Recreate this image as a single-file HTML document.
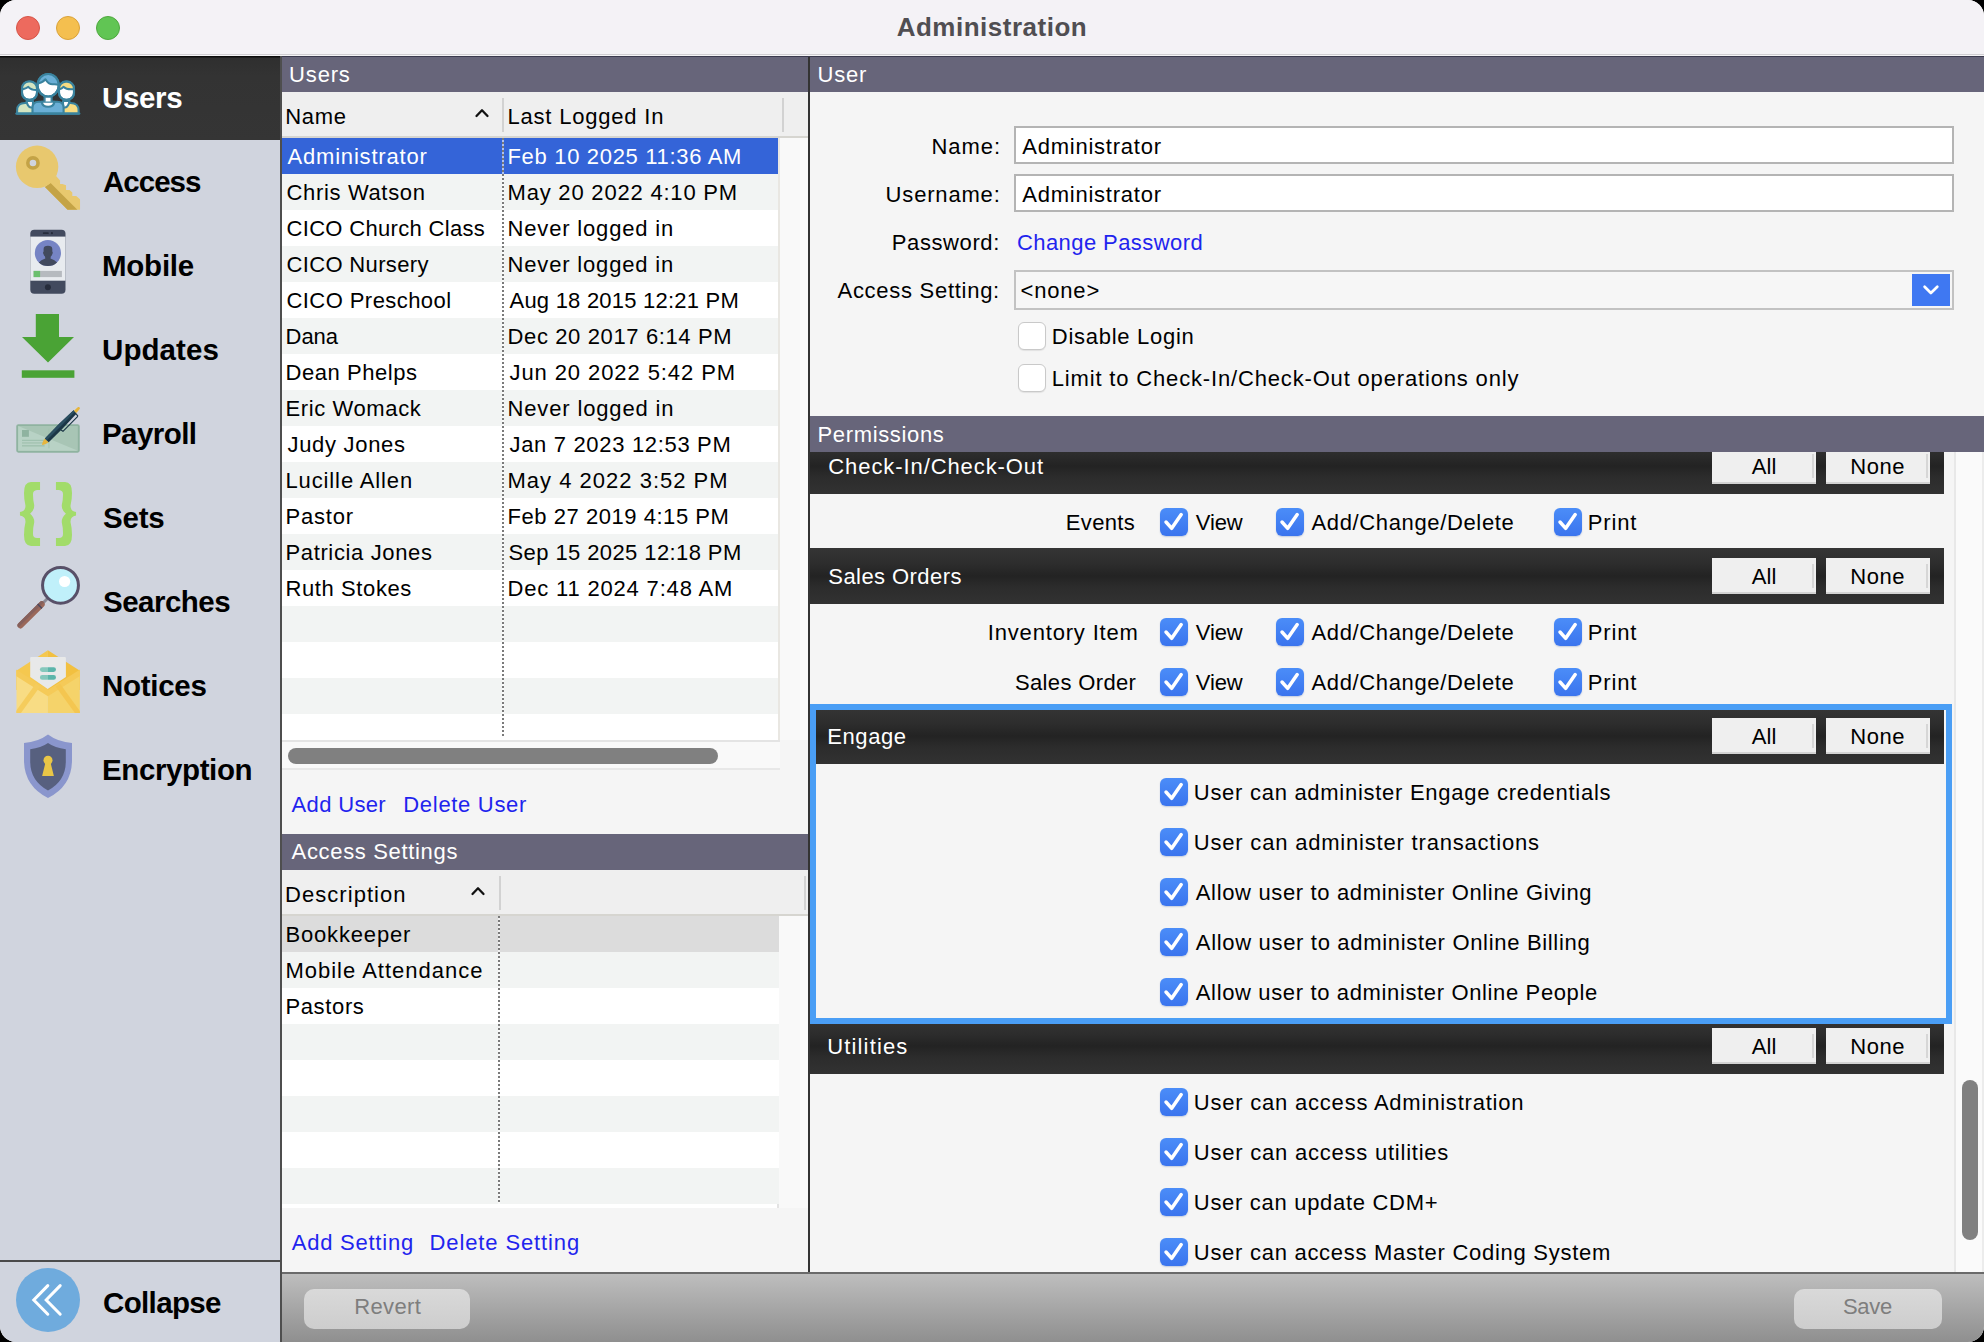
<!DOCTYPE html><html><head><meta charset="utf-8"><title>Administration</title><style>
html,body{margin:0;padding:0;background:#000;width:1984px;height:1342px;overflow:hidden}
#win{position:absolute;left:0;top:0;width:1984px;height:1342px;border-radius:16px;overflow:hidden;background:#f5f5f5;font-family:"Liberation Sans", sans-serif}
.t{position:absolute;white-space:nowrap;line-height:1;font-family:"Liberation Sans", sans-serif}
.r{position:absolute}
svg{position:absolute;overflow:visible}

</style></head><body><div id="win">
<div class="r" style="left:0px;top:0px;width:1984px;height:54px;background:#f4f2f6"></div>
<div class="r" style="left:0px;top:54px;width:1984px;height:1px;background:#d0ced2"></div>
<div class="r" style="left:0px;top:55px;width:1984px;height:1px;background:#f6f5f7"></div>
<div class="r" style="left:16px;top:16px;width:24px;height:24px;background:#ed6a5e;border-radius:50%;box-sizing:border-box;border:1px solid #d65548"></div>
<div class="r" style="left:56px;top:16px;width:24px;height:24px;background:#f4bf4f;border-radius:50%;box-sizing:border-box;border:1px solid #d9a23a"></div>
<div class="r" style="left:96px;top:16px;width:24px;height:24px;background:#61c554;border-radius:50%;box-sizing:border-box;border:1px solid #4fa83f"></div>
<div class="t" style="left:896.70px;top:13.59px;font-size:26px;color:#504e52;font-weight:700;letter-spacing:0.508px;">Administration</div>
<div class="r" style="left:0px;top:56px;width:280px;height:1286px;background:#d0d4de"></div>
<div class="r" style="left:0px;top:56px;width:280px;height:84px;background:linear-gradient(#0c0c0c 0px,#0c0c0c 1px,#2f2f2f 2px,#333 20px,#353535 100%)"></div>
<div class="r" style="left:280px;top:56px;width:2px;height:1286px;background:#4e4e4e"></div>
<div class="r" style="left:0px;top:1260px;width:280px;height:2px;background:#4a4a4a"></div>
<div class="t" style="left:102.00px;top:82.93px;font-size:29.5px;color:#fff;font-weight:700;letter-spacing:-0.350px;">Users</div>
<div class="t" style="left:103.00px;top:166.93px;font-size:29.5px;color:#000;font-weight:700;letter-spacing:-0.980px;">Access</div>
<div class="t" style="left:102.00px;top:250.93px;font-size:29.5px;color:#000;font-weight:700;letter-spacing:-0.240px;">Mobile</div>
<div class="t" style="left:102.00px;top:334.93px;font-size:29.5px;color:#000;font-weight:700;letter-spacing:0.083px;">Updates</div>
<div class="t" style="left:102.00px;top:418.93px;font-size:29.5px;color:#000;font-weight:700;letter-spacing:-0.567px;">Payroll</div>
<div class="t" style="left:103.00px;top:502.93px;font-size:29.5px;color:#000;font-weight:700;letter-spacing:-0.200px;">Sets</div>
<div class="t" style="left:103.00px;top:586.93px;font-size:29.5px;color:#000;font-weight:700;letter-spacing:-0.514px;">Searches</div>
<div class="t" style="left:102.00px;top:670.93px;font-size:29.5px;color:#000;font-weight:700;letter-spacing:-0.283px;">Notices</div>
<div class="t" style="left:102.00px;top:754.93px;font-size:29.5px;color:#000;font-weight:700;letter-spacing:-0.389px;">Encryption</div>
<div class="t" style="left:103.00px;top:1287.73px;font-size:29.5px;color:#000;font-weight:700;letter-spacing:-0.643px;">Collapse</div>
<svg style="left:0;top:0" width="1984" height="1342" viewBox="0 0 1984 1342">
<defs>
 <clipPath id="chead"><ellipse cx="48.15" cy="85.25" rx="10.6" ry="11.3"/></clipPath>
 <clipPath id="lhead"><rect x="22" y="81.5" width="15" height="18.3" rx="7"/></clipPath>
 <clipPath id="rhead"><rect x="59" y="81.6" width="15" height="18.3" rx="7"/></clipPath>
</defs>
<g stroke="#3a839e" stroke-width="2.1" stroke-linejoin="round">
 <path d="M17.1,113.6 L17.1,110.5 Q17.1,103 25,103 L33,103 L33,113.6 Z" fill="#d4e5c1"/>
 <path d="M78.6,113.6 L78.6,110.5 Q78.6,103 70.6,103 L63,103 L63,113.6 Z" fill="#f7dc82"/>
 <path d="M26.5,101 Q27.5,107 31,107.5 L33,107.5 L33,101 Z" fill="#fff"/>
 <path d="M69.5,101 Q68.5,107 65,107.5 L63,107.5 L63,101 Z" fill="#fff"/>
 <rect x="22" y="81.5" width="15" height="18.3" rx="7" fill="#fff"/>
 <rect x="59" y="81.6" width="15" height="18.3" rx="7" fill="#fff"/>
 <g clip-path="url(#lhead)"><path d="M20,70 L20,89.3 L22.9,89.3 Q26.5,88 28.3,86.8 Q31,90.2 36.9,90 L40,90 L40,70 Z" fill="#d4e5c1" stroke-width="2"/></g>
 <g clip-path="url(#rhead)"><path d="M57,70 L57,89.3 L59.4,89.3 Q62,88.5 63.4,86.8 Q66.5,89.8 72.7,89.3 L76,89.3 L76,70 Z" fill="#f7dc82" stroke-width="2"/></g>
 <rect x="22" y="81.5" width="15" height="18.3" rx="7" fill="none"/>
 <rect x="59" y="81.6" width="15" height="18.3" rx="7" fill="none"/>
 <path d="M32.5,113.6 L32.5,107.5 Q32.5,101.7 39,101.7 L57.2,101.7 Q63.6,101.7 63.6,107.5 L63.6,113.6 Z" fill="#6aafd6"/>
 <path d="M41.6,101.7 Q42.5,106.8 48.1,106.8 Q53.6,106.8 54.5,101.7 Z" fill="#fff"/>
 <rect x="44.6" y="95" width="7" height="6.5" fill="#fff" stroke="none"/>
 <path d="M44.6,96 L44.6,101.7 M51.6,96 L51.6,101.7" fill="none"/>
 <ellipse cx="48.15" cy="85.25" rx="10.6" ry="11.3" fill="#fff"/>
 <g clip-path="url(#chead)"><path d="M36,70 L36,83.3 L38.7,83.3 Q43.5,82 45.5,79.2 Q48.5,84.6 53,84.3 Q56.5,84 58.8,85 L61,85 L61,70 Z" fill="#6aafd6" stroke-width="2"/></g>
 <ellipse cx="48.15" cy="85.25" rx="10.6" ry="11.3" fill="none"/>
 <path d="M16.5,113.6 L79.2,113.6" stroke-width="2.4" stroke-linecap="round"/>
</g></svg>
<svg style="left:0;top:0" width="1984" height="1342" viewBox="0 0 1984 1342">
 <path d="M44.87,187.09 L55.9,175.77 L60.07,180.54 L60.07,184.11 L62.46,184.11 L66.04,185.3 L66.04,190.07 L69.61,190.07 L72.3,192.46 L72.3,196.04 L76.17,196.04 L80.04,199.31 L80.04,209.75 L67.53,209.75 Z" fill="#e8c86e"/>
 <path d="M44.87,187.09 L50.54,182.92 L77.36,209.75 L67.53,209.75 Z" fill="#c4a346"/>
 <circle cx="37.1" cy="166.8" r="21.2" fill="#e8c86e"/>
 <circle cx="32.95" cy="162.95" r="5.1" fill="#d0d4de" stroke="#c4a346" stroke-width="3.6"/>
</svg>
<svg style="left:0;top:0" width="1984" height="1342" viewBox="0 0 1984 1342">
 <defs><clipPath id="mav"><circle cx="47.9" cy="253" r="13.1"/></clipPath></defs>
 <rect x="30.3" y="229.7" width="35.2" height="64.1" rx="4" fill="#424a5e"/>
 <rect x="30.3" y="236.6" width="35.2" height="44.1" fill="#e8ebef"/>
 <rect x="42.8" y="232.3" width="6" height="1.7" rx="0.85" fill="#262c3b"/>
 <circle cx="51.9" cy="233.15" r="1.1" fill="#262c3b"/>
 <circle cx="47.9" cy="287.3" r="3" fill="#262c3b"/>
 <circle cx="47.9" cy="253" r="13.1" fill="#7684c4"/>
 <g clip-path="url(#mav)" fill="#424a5e">
  <path d="M43.6,249 Q43.6,245.8 47.9,245.8 Q52.3,245.8 52.3,249 L52.3,251.5 Q53,252 52.6,253.6 Q52,255.5 50.8,256.5 L50.5,258.5 Q55,260 57,262.5 Q58,264 58,268 L37.8,268 Q37.8,264 38.8,262.5 Q40.8,260 45.3,258.5 L45,256.5 Q43.8,255.5 43.2,253.6 Q42.8,252 43.6,251.5 Z"/>
 </g>
 <rect x="33.6" y="270.9" width="28.3" height="6.2" fill="#b6babf"/>
 <rect x="33.6" y="270.9" width="6.5" height="6.2" fill="#6cbf6e"/>
</svg>
<svg style="left:0;top:0" width="1984" height="1342" viewBox="0 0 1984 1342">
 <path d="M35.8,314 L59,314 L59,337 L74,337 L48,362.5 L22,337 L35.8,337 Z" fill="#4aa335"/>
 <rect x="21.8" y="370.3" width="52.6" height="7.5" fill="#4aa335"/>
</svg>
<svg style="left:0;top:0" width="1984" height="1342" viewBox="0 0 1984 1342">
 <rect x="17.2" y="425.1" width="61.6" height="26.6" rx="1.2" fill="#a8c5b5" stroke="#8fb3a0" stroke-width="1.9"/>
 <path d="M18.2,426.1 L77.9,450.7 L18.2,450.7 Z" fill="#b8d2c5"/>
 <rect x="22" y="430" width="6.9" height="6.8" fill="#8fb3a0"/>
 <rect x="22" y="439.8" width="22.6" height="1.1" fill="#9dbfac"/>
 <rect x="22" y="442.4" width="22.6" height="1.1" fill="#9dbfac"/>
 <rect x="22" y="445.2" width="22.6" height="1.3" fill="#9dbfac"/>
 <rect x="48.5" y="428.7" width="0.9" height="19.6" fill="#a2c2b0"/>
 <g transform="translate(42,445.2) rotate(-45.2)">
  <path d="M0.3,0 Q1.5,-1.8 6.8,-2.7 L6.8,2.7 Q1.5,1.8 0.3,0 Z" fill="#e6b53c"/>
  <path d="M6.8,-2.7 Q26,-3.3 47,-2.2 L47,2.2 Q26,3.2 6.8,2.7 Z" fill="#1b3646"/>
  <path d="M6.8,-2.7 Q26,-3.3 47,-2.2 L47,-0.2 Q26,0 6.8,0 Z" fill="#2b4f61"/>
  <path d="M47,-1.7 L52.5,-1.3 Q54.3,0 52.5,1.3 L47,1.7 Z" fill="#e6b53c"/>
  <path d="M24.2,2.8 L24.6,5.1 L45.3,5.1 Q46.3,5 46.2,3.6 L45.8,2.2" stroke="#1b3646" stroke-width="1.15" fill="none" stroke-linejoin="round"/>
 </g>
</svg>
<svg style="left:0;top:0" width="1984" height="1342" viewBox="0 0 1984 1342">
 <path d="M40.05,481.95 L40.05,489.9 L37,489.9 Q32.7,490.3 33,494.7 Q33,500 34.2,505 Q34.6,510 30.1,513.8 Q34.6,517.6 34.2,522.6 Q33,527.6 33,533 Q32.7,538 37,538 L40.05,538 L40.05,545.9 L31,545.9 Q24,545.9 24,535 Q24,528 25.4,522.5 Q26,516.5 19.95,515.6 L19.95,512 Q26,511 25.4,505.2 Q24,499.6 24,492.9 Q24,481.95 31,481.95 Z" fill="#a2dc6a"/>
 <path d="M55.95,481.95 L55.95,489.9 L59.00,489.9 Q63.30,490.3 63.00,494.7 Q63.00,500 61.80,505 Q61.40,510 65.90,513.8 Q61.40,517.6 61.80,522.6 Q63.00,527.6 63.00,533 Q63.30,538 59.00,538 L55.95,538 L55.95,545.9 L65.00,545.9 Q72.00,545.9 72.00,535 Q72.00,528 70.60,522.5 Q70.00,516.5 76.05,515.6 L76.05,512 Q70.00,511 70.60,505.2 Q72.00,499.6 72.00,492.9 Q72.00,481.95 65.00,481.95 Z" fill="#a2dc6a"/>
</svg>
<svg style="left:0;top:0" width="1984" height="1342" viewBox="0 0 1984 1342">
 <path d="M42.5,603.5 L48,598" stroke="#8b8a96" stroke-width="3" />
 <g transform="translate(18.4,627.6) rotate(-45)">
  <rect x="0" y="-3" width="36" height="6" rx="3" fill="#9a685a"/>
  <path d="M3,-3 L33,-3 Q36,-3 36,0 L0,0 Q0,-3 3,-3 Z" fill="#85605c"/>
  <rect x="29.5" y="-3.05" width="1.5" height="6.1" fill="#4f4a5e"/>
 </g>
 <circle cx="60.5" cy="585.35" r="17.95" fill="#c0f0fa" stroke="#585068" stroke-width="3"/>
 <circle cx="64.6" cy="581.5" r="5.6" fill="#fff"/>
</svg>
<svg style="left:0;top:0" width="1984" height="1342" viewBox="0 0 1984 1342">
 <defs><clipPath id="envb"><rect x="16.3" y="650" width="63.6" height="63"/></clipPath></defs>
 <path d="M16.3,670.7 L47.9,650.3 L47.9,690 L16.3,690 Z" fill="#f5c84f"/>
 <path d="M79.9,670.7 L47.9,650.3 L47.9,690 L79.9,690 Z" fill="#f2c040"/>
 <path d="M30.2,658 Q30.2,657 31.2,657 L64.9,657 Q65.9,657 65.9,658 L65.9,677.1 L47.7,688.9 L30.2,677.1 Z" fill="#e8e9e9"/>
 <path d="M42.3,667.2 L48,667.2 L48,672 L42.3,672 A2.4,2.4 0 0 1 42.3,667.2 Z" fill="#84c8bc"/>
 <path d="M48,667.2 L53.6,667.2 A2.4,2.4 0 0 1 53.6,672 L48,672 Z" fill="#5bb5aa"/>
 <path d="M42.3,675 L48,675 L48,679.8 L42.3,679.8 A2.4,2.4 0 0 1 42.3,675 Z" fill="#84c8bc"/>
 <path d="M48,675 L53.6,675 A2.4,2.4 0 0 1 53.6,679.8 L48,679.8 Z" fill="#5bb5aa"/>
 <g clip-path="url(#envb)">
  <path d="M16.3,670.7 L47.9,690.8 L47.9,713 L16.3,713 Z" fill="#f8dc84"/>
  <path d="M79.9,670.7 L47.9,690.8 L47.9,713 L79.9,713 Z" fill="#f5d36a"/>
  <path d="M14,671.5 L47.9,693 L81.9,671.5" stroke="#f5ca58" stroke-width="5.4" fill="none" stroke-linejoin="miter"/>
  <path d="M38,685 L17,714" stroke="#f5cc5c" stroke-width="5.2"/>
  <path d="M57.8,685 L78.8,714" stroke="#f4c650" stroke-width="5.2"/>
 </g>
</svg>
<svg style="left:0;top:0" width="1984" height="1342" viewBox="0 0 1984 1342">
 <path d="M48,734.5 Q58,742 72,743 L72,760 Q72,786 48,798 Q24,786 24,760 L24,743 Q38,742 48,734.5Z" fill="#8a96cd"/>
 <path d="M48,743 Q55,748 65.8,749.2 L65.8,762 Q65.5,781 48,790.5 Q30.5,781 30.2,762 L30.2,749.2 Q41,748 48,743Z" fill="#57607f"/>
 <circle cx="48" cy="760.3" r="4.5" fill="#e9c647"/>
 <path d="M45.6,762 L50.4,762 L53.9,775.9 L42.1,775.9Z" fill="#e9c647"/>
</svg>
<svg style="left:0;top:0" width="1984" height="1342" viewBox="0 0 1984 1342">
 <circle cx="48" cy="1300" r="32" fill="#6fabdd"/>
 <path d="M47.8,1285.6 L33.8,1300 L47.8,1314.2" stroke="#fff" stroke-width="3" fill="none" stroke-linecap="round" stroke-linejoin="miter"/>
 <path d="M60.2,1285.6 L46.2,1300 L60.2,1314.2" stroke="#fff" stroke-width="3" fill="none" stroke-linecap="round" stroke-linejoin="miter"/>
</svg>
<div class="r" style="left:282px;top:56px;width:526px;height:1216px;background:#f5f5f5"></div>
<div class="r" style="left:282px;top:56px;width:526px;height:36px;background:#67657a"></div>
<div class="r" style="left:282px;top:56px;width:526px;height:1px;background:#3b3a4e"></div>
<div class="t" style="left:289.10px;top:64.38px;font-size:22px;color:#fff;font-weight:400;letter-spacing:0.825px;">Users</div>
<div class="r" style="left:282px;top:92px;width:526px;height:44px;background:#efefef"></div>
<div class="r" style="left:282px;top:136px;width:526px;height:2px;background:#d6d5d0"></div>
<div class="r" style="left:502px;top:98px;width:2px;height:34px;background:#d2d2d2"></div>
<div class="r" style="left:782px;top:98px;width:2px;height:34px;background:#d2d2d2"></div>
<div class="t" style="left:285.30px;top:106.38px;font-size:22px;color:#000;font-weight:400;letter-spacing:0.667px;">Name</div>
<div class="t" style="left:507.40px;top:106.38px;font-size:22px;color:#000;font-weight:400;letter-spacing:0.808px;">Last Logged In</div>
<svg style="left:474px;top:107px" width="16" height="12"><path d="M2.5,9 L8,3.3 L13.5,9" stroke="#111" stroke-width="2.3" fill="none" stroke-linecap="round" stroke-linejoin="round"/></svg>
<div class="r" style="left:778px;top:138px;width:30px;height:602px;background:#f9f9f9"></div>
<div class="r" style="left:778px;top:138px;width:2px;height:602px;background:#e9e7e2"></div>
<div class="r" style="left:282px;top:138px;width:496px;height:36px;background:#3464d8"></div>
<div class="r" style="left:282px;top:174px;width:496px;height:36px;background:#f2f4f3"></div>
<div class="r" style="left:282px;top:210px;width:496px;height:36px;background:#ffffff"></div>
<div class="r" style="left:282px;top:246px;width:496px;height:36px;background:#f2f4f3"></div>
<div class="r" style="left:282px;top:282px;width:496px;height:36px;background:#ffffff"></div>
<div class="r" style="left:282px;top:318px;width:496px;height:36px;background:#f2f4f3"></div>
<div class="r" style="left:282px;top:354px;width:496px;height:36px;background:#ffffff"></div>
<div class="r" style="left:282px;top:390px;width:496px;height:36px;background:#f2f4f3"></div>
<div class="r" style="left:282px;top:426px;width:496px;height:36px;background:#ffffff"></div>
<div class="r" style="left:282px;top:462px;width:496px;height:36px;background:#f2f4f3"></div>
<div class="r" style="left:282px;top:498px;width:496px;height:36px;background:#ffffff"></div>
<div class="r" style="left:282px;top:534px;width:496px;height:36px;background:#f2f4f3"></div>
<div class="r" style="left:282px;top:570px;width:496px;height:36px;background:#ffffff"></div>
<div class="r" style="left:282px;top:606px;width:496px;height:36px;background:#f2f4f3"></div>
<div class="r" style="left:282px;top:642px;width:496px;height:36px;background:#ffffff"></div>
<div class="r" style="left:282px;top:678px;width:496px;height:36px;background:#f2f4f3"></div>
<div class="r" style="left:282px;top:714px;width:496px;height:26px;background:#ffffff"></div>
<div class="r" style="left:502px;top:138px;width:2px;height:600px;background:repeating-linear-gradient(#7a7a7a 0 2px,rgba(255,255,255,0.6) 2px 4px)"></div>
<div class="t" style="left:287.50px;top:146.38px;font-size:22px;color:#fff;font-weight:400;letter-spacing:0.808px;">Administrator</div>
<div class="t" style="left:507.50px;top:146.38px;font-size:22px;color:#fff;font-weight:400;letter-spacing:0.679px;">Feb 10 2025 11:36 AM</div>
<div class="t" style="left:286.50px;top:182.38px;font-size:22px;color:#000;font-weight:400;letter-spacing:0.655px;">Chris Watson</div>
<div class="t" style="left:507.50px;top:182.38px;font-size:22px;color:#000;font-weight:400;letter-spacing:0.800px;">May 20 2022 4:10 PM</div>
<div class="t" style="left:286.50px;top:218.38px;font-size:22px;color:#000;font-weight:400;letter-spacing:0.325px;">CICO Church Class</div>
<div class="t" style="left:507.50px;top:218.38px;font-size:22px;color:#000;font-weight:400;letter-spacing:0.836px;">Never logged in</div>
<div class="t" style="left:286.50px;top:254.38px;font-size:22px;color:#000;font-weight:400;letter-spacing:0.345px;">CICO Nursery</div>
<div class="t" style="left:507.50px;top:254.38px;font-size:22px;color:#000;font-weight:400;letter-spacing:0.836px;">Never logged in</div>
<div class="t" style="left:286.50px;top:290.38px;font-size:22px;color:#000;font-weight:400;letter-spacing:0.431px;">CICO Preschool</div>
<div class="t" style="left:509.50px;top:290.38px;font-size:22px;color:#000;font-weight:400;letter-spacing:0.221px;">Aug 18 2015 12:21 PM</div>
<div class="t" style="left:285.50px;top:326.38px;font-size:22px;color:#000;font-weight:400;letter-spacing:0.000px;">Dana</div>
<div class="t" style="left:507.50px;top:326.38px;font-size:22px;color:#000;font-weight:400;letter-spacing:0.628px;">Dec 20 2017 6:14 PM</div>
<div class="t" style="left:285.50px;top:362.38px;font-size:22px;color:#000;font-weight:400;letter-spacing:0.560px;">Dean Phelps</div>
<div class="t" style="left:509.50px;top:362.38px;font-size:22px;color:#000;font-weight:400;letter-spacing:0.911px;">Jun 20 2022 5:42 PM</div>
<div class="t" style="left:285.50px;top:398.38px;font-size:22px;color:#000;font-weight:400;letter-spacing:0.610px;">Eric Womack</div>
<div class="t" style="left:507.50px;top:398.38px;font-size:22px;color:#000;font-weight:400;letter-spacing:0.850px;">Never logged in</div>
<div class="t" style="left:287.50px;top:434.38px;font-size:22px;color:#000;font-weight:400;letter-spacing:0.689px;">Judy Jones</div>
<div class="t" style="left:509.50px;top:434.38px;font-size:22px;color:#000;font-weight:400;letter-spacing:0.672px;">Jan 7 2023 12:53 PM</div>
<div class="t" style="left:285.50px;top:470.38px;font-size:22px;color:#000;font-weight:400;letter-spacing:0.875px;">Lucille Allen</div>
<div class="t" style="left:507.50px;top:470.38px;font-size:22px;color:#000;font-weight:400;letter-spacing:1.006px;">May 4 2022 3:52 PM</div>
<div class="t" style="left:285.50px;top:506.38px;font-size:22px;color:#000;font-weight:400;letter-spacing:0.820px;">Pastor</div>
<div class="t" style="left:507.50px;top:506.38px;font-size:22px;color:#000;font-weight:400;letter-spacing:0.544px;">Feb 27 2019 4:15 PM</div>
<div class="t" style="left:285.50px;top:542.38px;font-size:22px;color:#000;font-weight:400;letter-spacing:0.631px;">Patricia Jones</div>
<div class="t" style="left:508.50px;top:542.38px;font-size:22px;color:#000;font-weight:400;letter-spacing:0.405px;">Sep 15 2025 12:18 PM</div>
<div class="t" style="left:285.50px;top:578.38px;font-size:22px;color:#000;font-weight:400;letter-spacing:0.600px;">Ruth Stokes</div>
<div class="t" style="left:507.50px;top:578.38px;font-size:22px;color:#000;font-weight:400;letter-spacing:0.822px;">Dec 11 2024 7:48 AM</div>
<div class="r" style="left:282px;top:740px;width:498px;height:30px;background:#f9f9f9"></div>
<div class="r" style="left:282px;top:740px;width:498px;height:2px;background:#e4e4e4"></div>
<div class="r" style="left:282px;top:768px;width:498px;height:2px;background:#e8e8e8"></div>
<div class="r" style="left:288px;top:748px;width:430px;height:16px;background:#808080;border-radius:8px"></div>
<div class="t" style="left:291.60px;top:794.38px;font-size:22px;color:#1f24ee;font-weight:400;letter-spacing:0.343px;">Add User</div>
<div class="t" style="left:403.30px;top:794.38px;font-size:22px;color:#1f24ee;font-weight:400;letter-spacing:0.690px;">Delete User</div>
<div class="r" style="left:282px;top:834px;width:526px;height:36px;background:#67657a"></div>
<div class="t" style="left:291.60px;top:841.38px;font-size:22px;color:#fff;font-weight:400;letter-spacing:0.664px;">Access Settings</div>
<div class="r" style="left:282px;top:870px;width:526px;height:44px;background:#efefef"></div>
<div class="r" style="left:282px;top:914px;width:526px;height:2px;background:#d6d5d0"></div>
<div class="r" style="left:499px;top:876px;width:2px;height:34px;background:#d2d2d2"></div>
<div class="r" style="left:804px;top:876px;width:2px;height:34px;background:#d2d2d2"></div>
<div class="t" style="left:285.00px;top:884.38px;font-size:22px;color:#000;font-weight:400;letter-spacing:1.050px;">Description</div>
<svg style="left:470px;top:885px" width="16" height="12"><path d="M2.5,9 L8,3.3 L13.5,9" stroke="#111" stroke-width="2.3" fill="none" stroke-linecap="round" stroke-linejoin="round"/></svg>
<div class="r" style="left:779px;top:916px;width:29px;height:292px;background:#f9f9f9"></div>
<div class="r" style="left:282px;top:1204px;width:497px;height:4px;background:#ffffff"></div>
<div class="r" style="left:777px;top:916px;width:2px;height:292px;background:#e3e3e3"></div>
<div class="r" style="left:282px;top:916px;width:497px;height:36px;background:#dcdcdc"></div>
<div class="r" style="left:282px;top:952px;width:497px;height:36px;background:#f2f4f3"></div>
<div class="r" style="left:282px;top:988px;width:497px;height:36px;background:#ffffff"></div>
<div class="r" style="left:282px;top:1024px;width:497px;height:36px;background:#f2f4f3"></div>
<div class="r" style="left:282px;top:1060px;width:497px;height:36px;background:#ffffff"></div>
<div class="r" style="left:282px;top:1096px;width:497px;height:36px;background:#f2f4f3"></div>
<div class="r" style="left:282px;top:1132px;width:497px;height:36px;background:#ffffff"></div>
<div class="r" style="left:282px;top:1168px;width:497px;height:36px;background:#f2f4f3"></div>
<div class="r" style="left:498px;top:916px;width:2px;height:288px;background:repeating-linear-gradient(#7a7a7a 0 2px,rgba(255,255,255,0.6) 2px 4px)"></div>
<div class="t" style="left:285.40px;top:924.38px;font-size:22px;color:#000;font-weight:400;letter-spacing:0.844px;">Bookkeeper</div>
<div class="t" style="left:285.40px;top:960.38px;font-size:22px;color:#000;font-weight:400;letter-spacing:1.006px;">Mobile Attendance</div>
<div class="t" style="left:285.40px;top:996.38px;font-size:22px;color:#000;font-weight:400;letter-spacing:0.650px;">Pastors</div>
<div class="t" style="left:291.70px;top:1232.38px;font-size:22px;color:#1f24ee;font-weight:400;letter-spacing:0.770px;">Add Setting</div>
<div class="t" style="left:429.60px;top:1232.38px;font-size:22px;color:#1f24ee;font-weight:400;letter-spacing:0.877px;">Delete Setting</div>
<div class="r" style="left:808px;top:56px;width:2px;height:1216px;background:#333"></div>
<div class="r" style="left:810px;top:56px;width:1174px;height:1216px;background:#f5f5f5"></div>
<div class="r" style="left:810px;top:56px;width:1174px;height:36px;background:#67657a"></div>
<div class="r" style="left:808px;top:56px;width:1176px;height:1px;background:#3b3a4e"></div>
<div class="t" style="left:817.50px;top:64.38px;font-size:22px;color:#fff;font-weight:400;letter-spacing:0.800px;">User</div>
<div class="t" style="left:931.50px;top:136.38px;font-size:22px;color:#000;font-weight:400;letter-spacing:0.925px;">Name:</div>
<div class="t" style="left:885.60px;top:184.38px;font-size:22px;color:#000;font-weight:400;letter-spacing:0.825px;">Username:</div>
<div class="t" style="left:891.80px;top:232.38px;font-size:22px;color:#000;font-weight:400;letter-spacing:0.600px;">Password:</div>
<div class="t" style="left:837.50px;top:280.38px;font-size:22px;color:#000;font-weight:400;letter-spacing:0.721px;">Access Setting:</div>
<div class="r" style="left:1014px;top:126px;width:940px;height:38px;background:#fff;box-sizing:border-box;border:2px solid #b4b4b4"></div>
<div class="r" style="left:1014px;top:174px;width:940px;height:38px;background:#fff;box-sizing:border-box;border:2px solid #b4b4b4"></div>
<div class="t" style="left:1022.20px;top:136.38px;font-size:22px;color:#000;font-weight:400;letter-spacing:0.775px;">Administrator</div>
<div class="t" style="left:1022.20px;top:184.38px;font-size:22px;color:#000;font-weight:400;letter-spacing:0.775px;">Administrator</div>
<div class="t" style="left:1017.00px;top:232.38px;font-size:22px;color:#1f24ee;font-weight:400;letter-spacing:0.421px;">Change Password</div>
<div class="r" style="left:1014px;top:270px;width:940px;height:40px;background:#f6f6f6;box-sizing:border-box;border:2px solid #c2c2c2"></div>
<div class="t" style="left:1020.50px;top:280.38px;font-size:22px;color:#000;font-weight:400;letter-spacing:0.820px;">&lt;none&gt;</div>
<div class="r" style="left:1912px;top:274px;width:38px;height:32px;background:#3f78f2"></div>
<svg style="left:1912px;top:274px" width="38" height="32"><path d="M12.6,12.7 L18.9,19 L25.3,12.7" stroke="#fff" stroke-width="2.7" fill="none" stroke-linecap="round" stroke-linejoin="round"/></svg>
<div class="r" style="left:1018px;top:322px;width:28px;height:28px;background:#fff;border-radius:6px;box-sizing:border-box;border:1px solid #c9c9c9;box-shadow:0 1px 1px rgba(0,0,0,0.08)"></div>
<div class="t" style="left:1051.80px;top:325.88px;font-size:22px;color:#000;font-weight:400;letter-spacing:0.725px;">Disable Login</div>
<div class="r" style="left:1018px;top:364px;width:28px;height:28px;background:#fff;border-radius:6px;box-sizing:border-box;border:1px solid #c9c9c9;box-shadow:0 1px 1px rgba(0,0,0,0.08)"></div>
<div class="t" style="left:1051.80px;top:367.88px;font-size:22px;color:#000;font-weight:400;letter-spacing:0.833px;">Limit to Check-In/Check-Out operations only</div>
<div class="r" style="left:810px;top:416px;width:1174px;height:36px;background:#67657a"></div>
<div class="t" style="left:817.50px;top:424.38px;font-size:22px;color:#fff;font-weight:400;letter-spacing:0.650px;">Permissions</div>
<div class="r" style="left:810px;top:452px;width:1174px;height:820px;overflow:hidden;background:#f5f5f5">
<div class="r" style="left:1144px;top:0px;width:2px;height:820px;background:#e8e8e8"></div>
<div class="r" style="left:1146px;top:0px;width:28px;height:820px;background:#fafafa"></div>
<div class="r" style="left:1172px;top:0px;width:2px;height:820px;background:#ececec"></div>
<div class="r" style="left:1152px;top:628px;width:16px;height:160px;background:#808080;border-radius:8px"></div>
<div class="r" style="left:0px;top:-14px;width:1134px;height:56px;background:linear-gradient(#353535 0%,#2c2c2c 30%,#232323 50%,#2c2c2c 70%,#323232 100%)"></div><div class="t" style="left:18.30px;top:3.88px;font-size:22px;color:#fff;font-weight:400;letter-spacing:0.912px;">Check-In/Check-Out</div><div class="r" style="left:902px;top:-4px;width:104px;height:36px;background:#efefef;box-sizing:border-box;border-bottom:2px solid #d3d3d3"></div><div class="r" style="left:1002px;top:2px;width:2px;height:24px;background:#d6d6d6"></div><div class="t" style="left:941.80px;top:4.38px;font-size:22px;color:#000;font-weight:400;letter-spacing:0.100px;">All</div><div class="r" style="left:1016px;top:-4px;width:104px;height:36px;background:#efefef;box-sizing:border-box;border-bottom:2px solid #d3d3d3"></div><div class="r" style="left:1116px;top:2px;width:2px;height:24px;background:#d6d6d6"></div><div class="t" style="left:1040.30px;top:4.38px;font-size:22px;color:#000;font-weight:400;letter-spacing:0.533px;">None</div>
<div class="t" style="left:255.80px;top:60.38px;font-size:22px;color:#000;font-weight:400;letter-spacing:0.340px;">Events</div><div class="r" style="left:350px;top:56px;width:28px;height:28px;background:linear-gradient(#4b8df8,#3a74ee);border-radius:6px;box-shadow:0 1px 1.5px rgba(40,80,160,0.25)"></div><svg style="left:350px;top:56px" width="28" height="28"><path d="M6,14 L11.7,20.3 L21.2,6.6" stroke="#fff" stroke-width="3.5" fill="none" stroke-linecap="round" stroke-linejoin="round"/></svg><div class="t" style="left:385.80px;top:60.38px;font-size:22px;color:#000;font-weight:400;letter-spacing:-0.133px;">View</div><div class="r" style="left:466px;top:56px;width:28px;height:28px;background:linear-gradient(#4b8df8,#3a74ee);border-radius:6px;box-shadow:0 1px 1.5px rgba(40,80,160,0.25)"></div><svg style="left:466px;top:56px" width="28" height="28"><path d="M6,14 L11.7,20.3 L21.2,6.6" stroke="#fff" stroke-width="3.5" fill="none" stroke-linecap="round" stroke-linejoin="round"/></svg><div class="t" style="left:501.50px;top:60.38px;font-size:22px;color:#000;font-weight:400;letter-spacing:0.638px;">Add/Change/Delete</div><div class="r" style="left:744px;top:56px;width:28px;height:28px;background:linear-gradient(#4b8df8,#3a74ee);border-radius:6px;box-shadow:0 1px 1.5px rgba(40,80,160,0.25)"></div><svg style="left:744px;top:56px" width="28" height="28"><path d="M6,14 L11.7,20.3 L21.2,6.6" stroke="#fff" stroke-width="3.5" fill="none" stroke-linecap="round" stroke-linejoin="round"/></svg><div class="t" style="left:777.70px;top:60.38px;font-size:22px;color:#000;font-weight:400;letter-spacing:0.850px;">Print</div>
<div class="r" style="left:0px;top:96px;width:1134px;height:56px;background:linear-gradient(#353535 0%,#2c2c2c 30%,#232323 50%,#2c2c2c 70%,#323232 100%)"></div><div class="t" style="left:18.30px;top:113.88px;font-size:22px;color:#fff;font-weight:400;letter-spacing:0.436px;">Sales Orders</div><div class="r" style="left:902px;top:106px;width:104px;height:36px;background:#efefef;box-sizing:border-box;border-bottom:2px solid #d3d3d3"></div><div class="r" style="left:1002px;top:112px;width:2px;height:24px;background:#d6d6d6"></div><div class="t" style="left:941.80px;top:114.38px;font-size:22px;color:#000;font-weight:400;letter-spacing:0.100px;">All</div><div class="r" style="left:1016px;top:106px;width:104px;height:36px;background:#efefef;box-sizing:border-box;border-bottom:2px solid #d3d3d3"></div><div class="r" style="left:1116px;top:112px;width:2px;height:24px;background:#d6d6d6"></div><div class="t" style="left:1040.30px;top:114.38px;font-size:22px;color:#000;font-weight:400;letter-spacing:0.533px;">None</div>
<div class="t" style="left:177.80px;top:170.38px;font-size:22px;color:#000;font-weight:400;letter-spacing:0.823px;">Inventory Item</div><div class="r" style="left:350px;top:166px;width:28px;height:28px;background:linear-gradient(#4b8df8,#3a74ee);border-radius:6px;box-shadow:0 1px 1.5px rgba(40,80,160,0.25)"></div><svg style="left:350px;top:166px" width="28" height="28"><path d="M6,14 L11.7,20.3 L21.2,6.6" stroke="#fff" stroke-width="3.5" fill="none" stroke-linecap="round" stroke-linejoin="round"/></svg><div class="t" style="left:385.80px;top:170.38px;font-size:22px;color:#000;font-weight:400;letter-spacing:-0.133px;">View</div><div class="r" style="left:466px;top:166px;width:28px;height:28px;background:linear-gradient(#4b8df8,#3a74ee);border-radius:6px;box-shadow:0 1px 1.5px rgba(40,80,160,0.25)"></div><svg style="left:466px;top:166px" width="28" height="28"><path d="M6,14 L11.7,20.3 L21.2,6.6" stroke="#fff" stroke-width="3.5" fill="none" stroke-linecap="round" stroke-linejoin="round"/></svg><div class="t" style="left:501.50px;top:170.38px;font-size:22px;color:#000;font-weight:400;letter-spacing:0.638px;">Add/Change/Delete</div><div class="r" style="left:744px;top:166px;width:28px;height:28px;background:linear-gradient(#4b8df8,#3a74ee);border-radius:6px;box-shadow:0 1px 1.5px rgba(40,80,160,0.25)"></div><svg style="left:744px;top:166px" width="28" height="28"><path d="M6,14 L11.7,20.3 L21.2,6.6" stroke="#fff" stroke-width="3.5" fill="none" stroke-linecap="round" stroke-linejoin="round"/></svg><div class="t" style="left:777.70px;top:170.38px;font-size:22px;color:#000;font-weight:400;letter-spacing:0.850px;">Print</div>
<div class="t" style="left:205.00px;top:220.38px;font-size:22px;color:#000;font-weight:400;letter-spacing:0.350px;">Sales Order</div><div class="r" style="left:350px;top:216px;width:28px;height:28px;background:linear-gradient(#4b8df8,#3a74ee);border-radius:6px;box-shadow:0 1px 1.5px rgba(40,80,160,0.25)"></div><svg style="left:350px;top:216px" width="28" height="28"><path d="M6,14 L11.7,20.3 L21.2,6.6" stroke="#fff" stroke-width="3.5" fill="none" stroke-linecap="round" stroke-linejoin="round"/></svg><div class="t" style="left:385.80px;top:220.38px;font-size:22px;color:#000;font-weight:400;letter-spacing:-0.133px;">View</div><div class="r" style="left:466px;top:216px;width:28px;height:28px;background:linear-gradient(#4b8df8,#3a74ee);border-radius:6px;box-shadow:0 1px 1.5px rgba(40,80,160,0.25)"></div><svg style="left:466px;top:216px" width="28" height="28"><path d="M6,14 L11.7,20.3 L21.2,6.6" stroke="#fff" stroke-width="3.5" fill="none" stroke-linecap="round" stroke-linejoin="round"/></svg><div class="t" style="left:501.50px;top:220.38px;font-size:22px;color:#000;font-weight:400;letter-spacing:0.638px;">Add/Change/Delete</div><div class="r" style="left:744px;top:216px;width:28px;height:28px;background:linear-gradient(#4b8df8,#3a74ee);border-radius:6px;box-shadow:0 1px 1.5px rgba(40,80,160,0.25)"></div><svg style="left:744px;top:216px" width="28" height="28"><path d="M6,14 L11.7,20.3 L21.2,6.6" stroke="#fff" stroke-width="3.5" fill="none" stroke-linecap="round" stroke-linejoin="round"/></svg><div class="t" style="left:777.70px;top:220.38px;font-size:22px;color:#000;font-weight:400;letter-spacing:0.850px;">Print</div>
<div class="r" style="left:6px;top:256px;width:1128px;height:56px;background:linear-gradient(#353535 0%,#2c2c2c 30%,#232323 50%,#2c2c2c 70%,#323232 100%)"></div><div class="t" style="left:17.30px;top:273.88px;font-size:22px;color:#fff;font-weight:400;letter-spacing:0.580px;">Engage</div><div class="r" style="left:902px;top:266px;width:104px;height:36px;background:#efefef;box-sizing:border-box;border-bottom:2px solid #d3d3d3"></div><div class="r" style="left:1002px;top:272px;width:2px;height:24px;background:#d6d6d6"></div><div class="t" style="left:941.80px;top:274.38px;font-size:22px;color:#000;font-weight:400;letter-spacing:0.100px;">All</div><div class="r" style="left:1016px;top:266px;width:104px;height:36px;background:#efefef;box-sizing:border-box;border-bottom:2px solid #d3d3d3"></div><div class="r" style="left:1116px;top:272px;width:2px;height:24px;background:#d6d6d6"></div><div class="t" style="left:1040.30px;top:274.38px;font-size:22px;color:#000;font-weight:400;letter-spacing:0.533px;">None</div>
<div class="r" style="left:0px;top:252px;width:1142px;height:320px;box-sizing:border-box;border:6px solid #4a9ef5"></div>
<div class="r" style="left:350px;top:326px;width:28px;height:28px;background:linear-gradient(#4b8df8,#3a74ee);border-radius:6px;box-shadow:0 1px 1.5px rgba(40,80,160,0.25)"></div><svg style="left:350px;top:326px" width="28" height="28"><path d="M6,14 L11.7,20.3 L21.2,6.6" stroke="#fff" stroke-width="3.5" fill="none" stroke-linecap="round" stroke-linejoin="round"/></svg><div class="t" style="left:383.80px;top:330.38px;font-size:22px;color:#000;font-weight:400;letter-spacing:0.719px;">User can administer Engage credentials</div>
<div class="r" style="left:350px;top:376px;width:28px;height:28px;background:linear-gradient(#4b8df8,#3a74ee);border-radius:6px;box-shadow:0 1px 1.5px rgba(40,80,160,0.25)"></div><svg style="left:350px;top:376px" width="28" height="28"><path d="M6,14 L11.7,20.3 L21.2,6.6" stroke="#fff" stroke-width="3.5" fill="none" stroke-linecap="round" stroke-linejoin="round"/></svg><div class="t" style="left:383.80px;top:380.38px;font-size:22px;color:#000;font-weight:400;letter-spacing:0.803px;">User can administer transactions</div>
<div class="r" style="left:350px;top:426px;width:28px;height:28px;background:linear-gradient(#4b8df8,#3a74ee);border-radius:6px;box-shadow:0 1px 1.5px rgba(40,80,160,0.25)"></div><svg style="left:350px;top:426px" width="28" height="28"><path d="M6,14 L11.7,20.3 L21.2,6.6" stroke="#fff" stroke-width="3.5" fill="none" stroke-linecap="round" stroke-linejoin="round"/></svg><div class="t" style="left:385.80px;top:430.38px;font-size:22px;color:#000;font-weight:400;letter-spacing:0.649px;">Allow user to administer Online Giving</div>
<div class="r" style="left:350px;top:476px;width:28px;height:28px;background:linear-gradient(#4b8df8,#3a74ee);border-radius:6px;box-shadow:0 1px 1.5px rgba(40,80,160,0.25)"></div><svg style="left:350px;top:476px" width="28" height="28"><path d="M6,14 L11.7,20.3 L21.2,6.6" stroke="#fff" stroke-width="3.5" fill="none" stroke-linecap="round" stroke-linejoin="round"/></svg><div class="t" style="left:385.80px;top:480.38px;font-size:22px;color:#000;font-weight:400;letter-spacing:0.679px;">Allow user to administer Online Billing</div>
<div class="r" style="left:350px;top:526px;width:28px;height:28px;background:linear-gradient(#4b8df8,#3a74ee);border-radius:6px;box-shadow:0 1px 1.5px rgba(40,80,160,0.25)"></div><svg style="left:350px;top:526px" width="28" height="28"><path d="M6,14 L11.7,20.3 L21.2,6.6" stroke="#fff" stroke-width="3.5" fill="none" stroke-linecap="round" stroke-linejoin="round"/></svg><div class="t" style="left:385.80px;top:530.38px;font-size:22px;color:#000;font-weight:400;letter-spacing:0.638px;">Allow user to administer Online People</div>
<div class="r" style="left:0px;top:566px;width:1134px;height:56px;background:linear-gradient(#353535 0%,#2c2c2c 30%,#232323 50%,#2c2c2c 70%,#323232 100%)"></div><div class="t" style="left:17.30px;top:583.88px;font-size:22px;color:#fff;font-weight:400;letter-spacing:1.138px;">Utilities</div><div class="r" style="left:902px;top:576px;width:104px;height:36px;background:#efefef;box-sizing:border-box;border-bottom:2px solid #d3d3d3"></div><div class="r" style="left:1002px;top:582px;width:2px;height:24px;background:#d6d6d6"></div><div class="t" style="left:941.80px;top:584.38px;font-size:22px;color:#000;font-weight:400;letter-spacing:0.100px;">All</div><div class="r" style="left:1016px;top:576px;width:104px;height:36px;background:#efefef;box-sizing:border-box;border-bottom:2px solid #d3d3d3"></div><div class="r" style="left:1116px;top:582px;width:2px;height:24px;background:#d6d6d6"></div><div class="t" style="left:1040.30px;top:584.38px;font-size:22px;color:#000;font-weight:400;letter-spacing:0.533px;">None</div>
<div class="r" style="left:0px;top:566px;width:1142px;height:6px;background:#4a9ef5"></div>
<div class="r" style="left:350px;top:636px;width:28px;height:28px;background:linear-gradient(#4b8df8,#3a74ee);border-radius:6px;box-shadow:0 1px 1.5px rgba(40,80,160,0.25)"></div><svg style="left:350px;top:636px" width="28" height="28"><path d="M6,14 L11.7,20.3 L21.2,6.6" stroke="#fff" stroke-width="3.5" fill="none" stroke-linecap="round" stroke-linejoin="round"/></svg><div class="t" style="left:383.80px;top:640.38px;font-size:22px;color:#000;font-weight:400;letter-spacing:0.786px;">User can access Administration</div>
<div class="r" style="left:350px;top:686px;width:28px;height:28px;background:linear-gradient(#4b8df8,#3a74ee);border-radius:6px;box-shadow:0 1px 1.5px rgba(40,80,160,0.25)"></div><svg style="left:350px;top:686px" width="28" height="28"><path d="M6,14 L11.7,20.3 L21.2,6.6" stroke="#fff" stroke-width="3.5" fill="none" stroke-linecap="round" stroke-linejoin="round"/></svg><div class="t" style="left:383.80px;top:690.38px;font-size:22px;color:#000;font-weight:400;letter-spacing:0.775px;">User can access utilities</div>
<div class="r" style="left:350px;top:736px;width:28px;height:28px;background:linear-gradient(#4b8df8,#3a74ee);border-radius:6px;box-shadow:0 1px 1.5px rgba(40,80,160,0.25)"></div><svg style="left:350px;top:736px" width="28" height="28"><path d="M6,14 L11.7,20.3 L21.2,6.6" stroke="#fff" stroke-width="3.5" fill="none" stroke-linecap="round" stroke-linejoin="round"/></svg><div class="t" style="left:383.80px;top:740.38px;font-size:22px;color:#000;font-weight:400;letter-spacing:0.695px;">User can update CDM+</div>
<div class="r" style="left:350px;top:786px;width:28px;height:28px;background:linear-gradient(#4b8df8,#3a74ee);border-radius:6px;box-shadow:0 1px 1.5px rgba(40,80,160,0.25)"></div><svg style="left:350px;top:786px" width="28" height="28"><path d="M6,14 L11.7,20.3 L21.2,6.6" stroke="#fff" stroke-width="3.5" fill="none" stroke-linecap="round" stroke-linejoin="round"/></svg><div class="t" style="left:383.80px;top:790.38px;font-size:22px;color:#000;font-weight:400;letter-spacing:0.720px;">User can access Master Coding System</div>
</div>
<div class="r" style="left:282px;top:1272px;width:1702px;height:70px;background:linear-gradient(#bfbfbf,#8f8f8f)"></div>
<div class="r" style="left:282px;top:1272px;width:1702px;height:2px;background:#6a6a6a"></div>
<div class="r" style="left:304px;top:1289px;width:166px;height:40px;background:linear-gradient(#d9d9d9,#cdcdcd);border-radius:10px"></div>
<div class="t" style="left:354.20px;top:1296.38px;font-size:22px;color:#7e7e7e;font-weight:400;letter-spacing:0.360px;">Revert</div>
<div class="r" style="left:1794px;top:1289px;width:148px;height:40px;background:linear-gradient(#d9d9d9,#cdcdcd);border-radius:10px"></div>
<div class="t" style="left:1842.90px;top:1296.38px;font-size:22px;color:#7e7e7e;font-weight:400;letter-spacing:-0.267px;">Save</div>
</div></body></html>
